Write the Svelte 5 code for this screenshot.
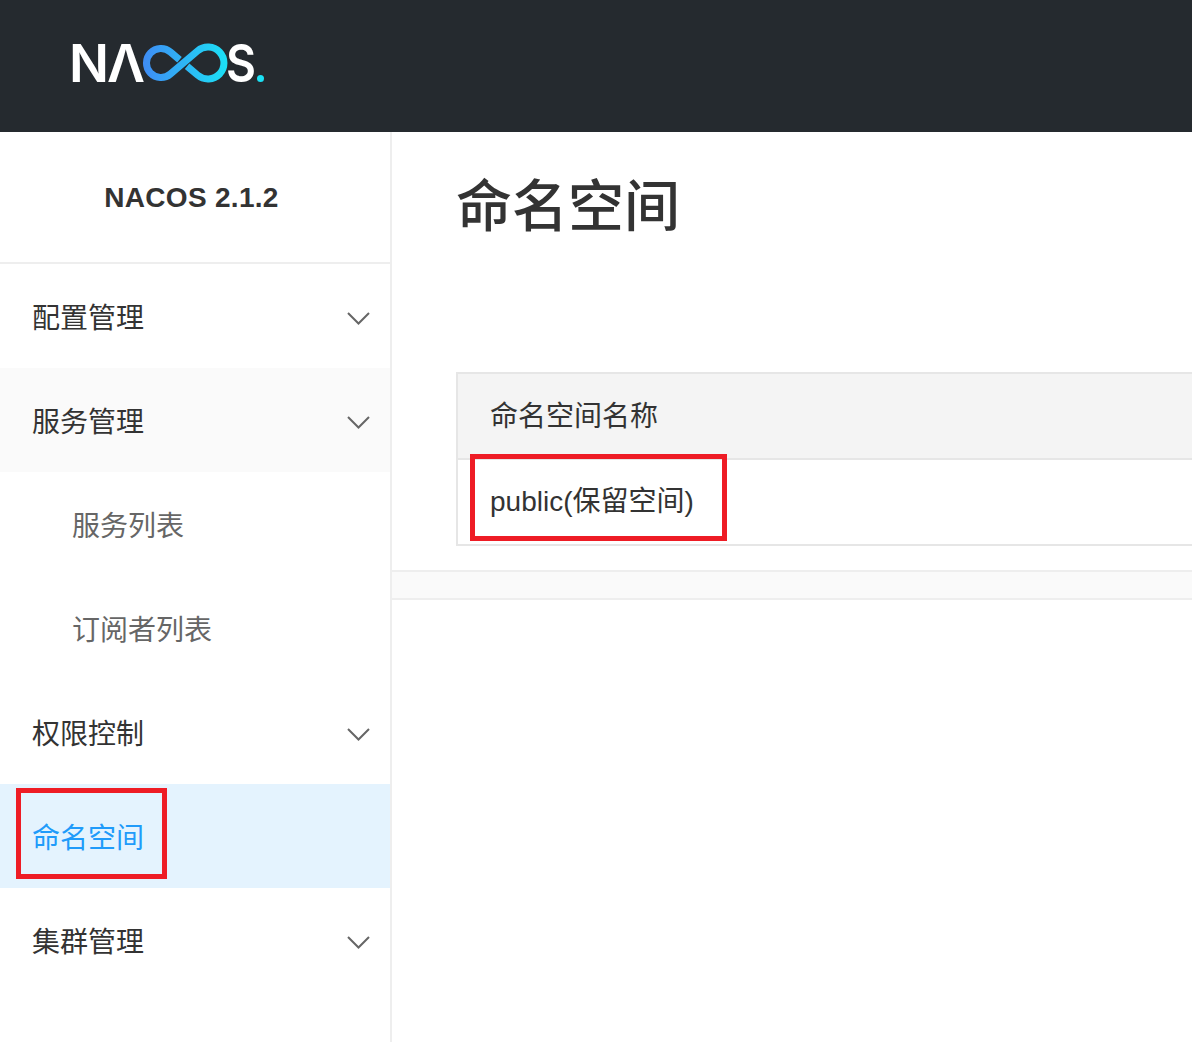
<script lang="ts">
	const menu = [
		{ label: '配置管理', arrow: true },
		{ label: '服务管理', arrow: true, open: true },
		{ label: '服务列表', sub: true },
		{ label: '订阅者列表', sub: true },
		{ label: '权限控制', arrow: true },
		{ label: '命名空间', active: true },
		{ label: '集群管理', arrow: true }
	];
</script>

<div class="page">
	<header class="topbar">
		<svg class="logo" width="300" height="132" viewBox="0 0 300 132" role="img" aria-label="NACOS">
			<defs>
				<linearGradient id="loop" gradientUnits="userSpaceOnUse" x1="143" y1="63" x2="228" y2="63">
					<stop offset="0" stop-color="#3f8cf5" />
					<stop offset="1" stop-color="#1be1f5" />
				</linearGradient>
			</defs>
			<text x="69" y="82" class="logo-letter" textLength="40" lengthAdjust="spacingAndGlyphs">N</text>
			<text x="107" y="82" class="logo-letter" textLength="38" lengthAdjust="spacingAndGlyphs">Λ</text>
			<text x="226" y="82" class="logo-letter" textLength="30" lengthAdjust="spacingAndGlyphs">S</text>
			<path
				class="logo-loop"
				d="M179.5 59.75 L170.4 52 A14.5 14.5 0 1 0 170.4 74 L197.6 50.8 A16 16 0 1 1 197.6 75.2 L187.1 66.25"
			/>
			<circle cx="260.5" cy="78.5" r="3.5" fill="#1be1f5" />
		</svg>
	</header>

	<div class="body">
		<aside class="sidebar">
			<div class="version">NACOS 2.1.2</div>
			<ul class="menu">
				{#each menu as item}
					<li class="menu-item" class:sub={item.sub} class:open={item.open} class:active={item.active}>
						<span>{item.label}</span>
						{#if item.arrow}
							<svg class="arrow" width="24" height="14" viewBox="0 0 24 14">
								<path d="M2 2 L12.5 12.5 L23 2" />
							</svg>
						{/if}
					</li>
				{/each}
			</ul>
			<div class="mark mark-menu"></div>
		</aside>

		<main class="content">
			<h1 class="title">命名空间</h1>
			<div class="table-wrap">
				<div class="table">
					<div class="cell head">命名空间名称</div>
					<div class="cell">public(保留空间)</div>
					<div class="mark mark-cell"></div>
				</div>
			</div>
			<div class="strip"></div>
		</main>
	</div>
</div>

<style>
	:global(body) {
		margin: 0;
		background: #fff;
	}
	.page {
		width: 1192px;
		height: 1042px;
		overflow: hidden;
		display: flex;
		flex-direction: column;
		font-family: 'Liberation Sans', 'Noto Sans CJK SC', sans-serif;
		color: #333;
	}
	.topbar {
		height: 132px;
		flex-shrink: 0;
		background: #252a2f;
	}
	.logo {
		display: block;
	}
	.logo-letter {
		font-family: Inter, sans-serif;
		font-size: 52px;
		font-weight: 600;
		fill: #fff;
	}
	.logo-loop {
		fill: none;
		stroke: url(#loop);
		stroke-width: 7;
	}
	.body {
		flex: 1;
		display: flex;
		min-height: 0;
	}
	.sidebar {
		position: relative;
		width: 392px;
		flex-shrink: 0;
		box-sizing: border-box;
		border-right: 2px solid #eee;
	}
	.version {
		height: 132px;
		box-sizing: border-box;
		padding: 2px 7px 0 0;
		border-bottom: 2px solid #eee;
		display: flex;
		align-items: center;
		justify-content: center;
		font-size: 28px;
		font-weight: 700;
		letter-spacing: 0.3px;
	}
	.menu {
		list-style: none;
		margin: 0;
		padding: 0;
	}
	.menu-item {
		height: 104px;
		padding: 0 20px 0 32px;
		display: flex;
		align-items: center;
		justify-content: space-between;
		font-size: 28px;
	}
	.menu-item.open {
		background: #fafafa;
	}
	.menu-item.sub {
		padding-left: 72px;
		color: #666;
	}
	.menu-item.active {
		background: #e4f3fe;
		color: #209bfa;
	}
	.arrow {
		margin-top: 4px;
	}
	.arrow path {
		fill: none;
		stroke: #666;
		stroke-width: 2;
	}
	.content {
		flex: 1;
		min-width: 0;
		overflow: hidden;
	}
	.title {
		margin: 0;
		padding: 41px 0 0 64px;
		height: 240px;
		box-sizing: border-box;
		font-size: 56px;
		line-height: 68px;
		font-weight: 500;
	}
	.table-wrap {
		padding-left: 64px;
		width: 900px;
	}
	.table {
		position: relative;
		border: 2px solid #e6e6e6;
	}
	.cell {
		height: 84px;
		box-sizing: border-box;
		padding: 0 0 6px 32px;
		display: flex;
		align-items: center;
		font-size: 28px;
	}
	.head {
		background: #f4f4f4;
		height: 86px;
		padding-bottom: 4px;
		border-bottom: 2px solid #e6e6e6;
	}
	.strip {
		margin-top: 24px;
		height: 26px;
		background: #fafafa;
		border-top: 2px solid #eee;
		border-bottom: 2px solid #eee;
	}
	.mark {
		position: absolute;
		box-sizing: border-box;
		border: 5px solid #ee1c25;
	}
	.mark-menu {
		left: 16px;
		top: 656px;
		width: 151px;
		height: 91px;
	}
	.mark-cell {
		left: 12px;
		top: 80px;
		width: 257px;
		height: 87px;
	}
</style>
